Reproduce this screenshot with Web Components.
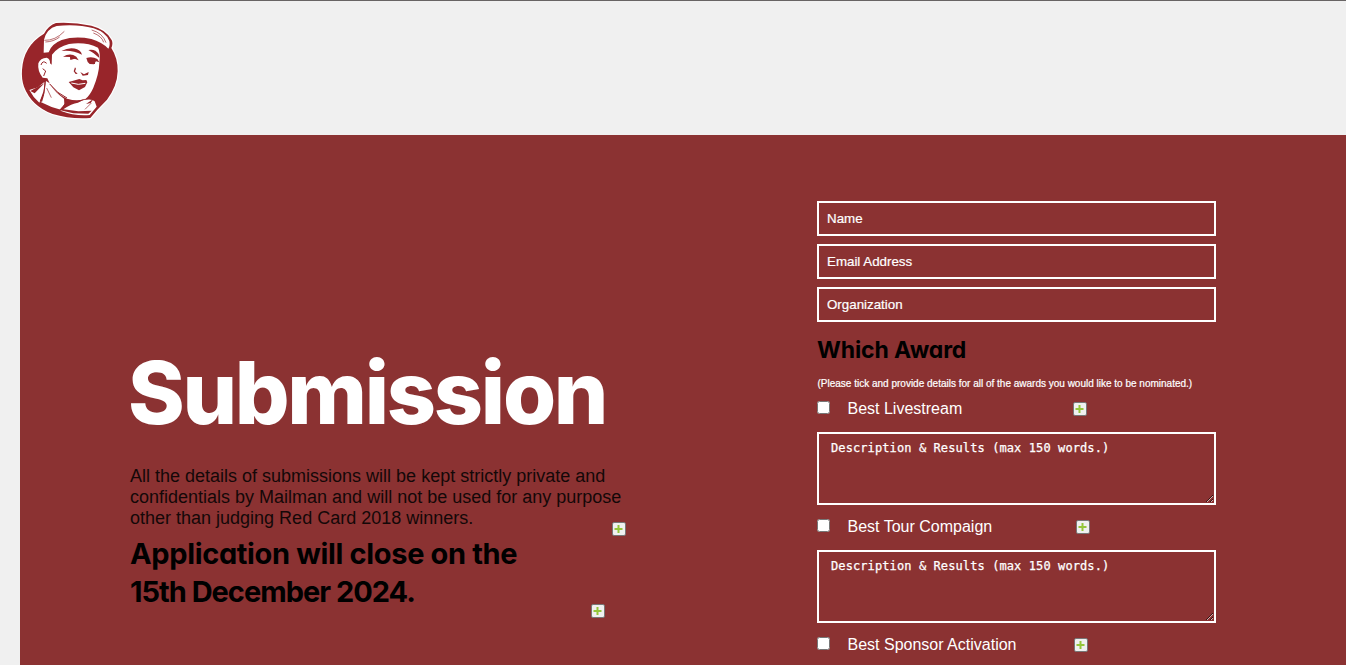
<!DOCTYPE html>
<html lang="en">
<head>
<meta charset="utf-8">
<title>Submission</title>
<style>
html,body{margin:0;height:100%;overflow:hidden}
body{background:#f0f0f0;font-family:"Liberation Sans",Arial,sans-serif}
</style>
</head>
<body>
<submission-page></submission-page>
<script>
const define = (name, html, setup) => customElements.define(name, class extends HTMLElement {
  connectedCallback() {
    if (this.shadowRoot) return;
    const t = document.createElement('template');
    t.innerHTML = html;
    this.attachShadow({mode: 'open'}).append(t.content.cloneNode(true));
    if (setup) setup(this, this.shadowRoot);
  }
});

define('brand-logo', `
<style>:host{display:block;width:100px;height:100px}svg{display:block}</style>
<svg width="100" height="100" viewBox="30 60 300 300" fill="none">
  <path id="badge" fill="#98252a" stroke="#fff" stroke-width="7" paint-order="stroke" d="M102 101Q116 76 138 69Q191 66 244 77Q290 89 305 120Q310 131 304 144Q324 175 323 214Q322 258 291 299L262 329L241 354Q180 358 128 342Q64 318 42 260Q34 237 36 210Q40 138 102 101Z"/>
  <path fill="#fff" d="M101 158L102 119Q110 86 140 78Q200 71 251 85Q288 97 298 123Q301 137 295 146Q275 126 244 117Q196 107 155 120Q124 132 116 157Z"/>
  <path fill="#fff" d="M126 164Q144 140 177 132Q228 125 264 143Q272 156 268 189Q267 222 250 263Q240 286 226 297Q201 305 171 296Q140 282 119 250L112 235L98 233Q82 214 85 190Q91 174 110 173Q121 176 120 190L125 194Z"/>
  <path fill="#fff" d="M58 270L84 262L103 246L101 278L88 308Q69 292 58 270Z M108 243L119 250Q134 277 162 296L163 311L155 330Q124 323 92 306L103 280Z M151 332L170 314Q202 307 222 300Q246 295 254 304L260 320L239 345Q196 349 151 332Z"/>
  <path fill="#98252a" d="M154 153Q171 145 184 145Q204 145 213 157L216 164Q187 149 154 153Z M159 170Q181 157 199 170L206 181L194 176L181 180L180 171Z M235 150Q256 146 266 162L268 174Q252 158 235 150Z M229 174Q247 169 262 177L268 187L258 184L252 193L239 192L233 186Z"/>
  <path fill="#98252a" d="M195 202L198 206L195 214L203 221L197 222L191 214Z M211 216L222 223L236 216L234 225L218 227Z M176 246L195 241L208 237L218 241L229 240L232 247L225 261L207 271L190 262Z"/>
  <path stroke="#fff" stroke-width="3" d="M184 249L205 253L226 250"/>
  <path fill="#98252a" d="M61 273L103 250L74 280Z M107 244L102 286L96 306L90 302L100 275Z M148 330L166 310Q200 304 226 296L204 308Q185 310 160 328L205 334L245 332L235 341L190 340Z M228 312L251 296L242 309Z"/>
  <path stroke="#98252a" stroke-width="3" d="M93 195Q98 179 110 190M98 206L107 213L101 228M119 252Q142 281 171 294"/>
  <path stroke="#98252a" stroke-width="2" d="M245 90Q278 99 288 128M250 99Q275 108 281 127M103 121Q136 122 163 94M106 126Q131 125 149 111M110 264L124 293M225 328L244 309"/>
  <path fill="#98252a" d="M181 168h14v8h-14zM244 179h11v13h-11z"/>
</svg>`);

define('plus-badge', `
<style>
:host{display:block;box-sizing:border-box;width:14px;height:14px;border:1px solid #777;border-radius:2px;background:#f0f0f0}
svg{display:block}
</style>
<svg width="12" height="12" viewBox="0 0 12 12"><path d="M1.5 5H4.5V2h2v3h3v2H6.5v3h-2V7h-3z" fill="#94c63b"/></svg>`);

define('text-field', `
<style>
:host{display:block}
input{display:block;box-sizing:border-box;width:100%;height:35px;margin:0;padding:0 8px;border:2px solid #fff;border-radius:0;background:transparent;color:#fff;font:13.333px "Liberation Sans",Arial,sans-serif}
input::placeholder{color:#fff;opacity:1;-webkit-text-stroke:.2px #fff}
</style><input type="text">`, (el, root) => {
  root.querySelector('input').placeholder = el.getAttribute('label');
});

define('award-entry', `
<style>
:host{display:block}
.row{display:flex;height:18px;align-items:flex-start}
input{width:13px;height:13px;margin:1px 0 0}
.name{margin-left:17.5px;width:var(--name-width,225.5px);font-size:16px;line-height:18px;color:#fff;white-space:nowrap}
plus-badge{margin-top:2px}
textarea{display:block;box-sizing:border-box;width:399px;height:73px;margin:14px 0 13px;padding:7px 12px;border:2px solid #fff;border-radius:0;background:transparent;resize:both;font:12px/15px "DejaVu Sans Mono",monospace;letter-spacing:.1px}
textarea::placeholder{color:#fff;opacity:1;-webkit-text-stroke:.25px #fff}
</style>
<div class="row"><input type="checkbox"><label class="name"><slot></slot></label><plus-badge></plus-badge></div>
<textarea placeholder="Description &amp; Results (max 150 words.)"></textarea>`);

define('submission-intro', `
<style>
:host{display:block;position:relative;box-sizing:border-box;padding:208px 0 0 108px}
h1,h2,p{margin:0;white-space:nowrap}
h1,h2{font-family:Inter,sans-serif;font-feature-settings:"cv11","ss03"}
h1{font-size:86px;line-height:100px;font-weight:800;color:#fff;letter-spacing:-2.3px}
p{margin:23px 0 0 2px;font-size:18px;line-height:21px;color:#140808}
h2{margin:6px 0 0 2px;font-size:29px;line-height:38px;font-weight:750;color:#000;letter-spacing:-.35px}
h2 span{letter-spacing:-1px}
plus-badge{position:absolute}
.a{left:592px;top:387px}.b{left:571px;top:469px}
</style>
<h1>Submission</h1>
<p>All the details of submissions will be kept strictly private and<br>confidentials by Mailman and will not be used for any purpose<br>other than judging Red Card 2018 winners.</p>
<h2>Application will close on the<br><span>15th December 2024.</span></h2>
<plus-badge class="a"></plus-badge><plus-badge class="b"></plus-badge>`);

define('submission-form', `
<style>
:host{display:block;width:399px;padding-top:66px}
.fields{display:grid;gap:8px}
h3{margin:13px 0 0;font:700 23px/30px Inter,sans-serif;font-feature-settings:"cv11","ss03";letter-spacing:-.1px;color:#000;white-space:nowrap}
p{margin:13px 0 10px .5px;font-size:10px;line-height:12px;color:#fff;white-space:nowrap;-webkit-text-stroke:.2px #fff}
</style>
<div class="fields"><text-field label="Name"></text-field><text-field label="Email Address"></text-field><text-field label="Organization"></text-field></div>
<h3>Which Award</h3>
<p>(Please tick and provide details for all of the awards you would like to be nominated.)</p>
<award-entry>Best Livestream</award-entry>
<award-entry style="--name-width:228.5px">Best Tour Compaign</award-entry>
<award-entry style="--name-width:226.5px">Best Sponsor Activation</award-entry>`);

define('submission-page', `
<style>
:host{display:flex;flex-direction:column;height:665px;overflow:hidden}
header{flex:none;box-sizing:border-box;height:135px;padding:19px 20px;border-top:1px solid #686464}
main{flex:none;display:grid;grid-template-columns:797px 399px;height:530px;margin-left:20px;background:#8b3232;overflow:hidden}
</style>
<header><brand-logo></brand-logo></header>
<main><submission-intro></submission-intro><submission-form></submission-form></main>`);
</script>
</body>
</html>
